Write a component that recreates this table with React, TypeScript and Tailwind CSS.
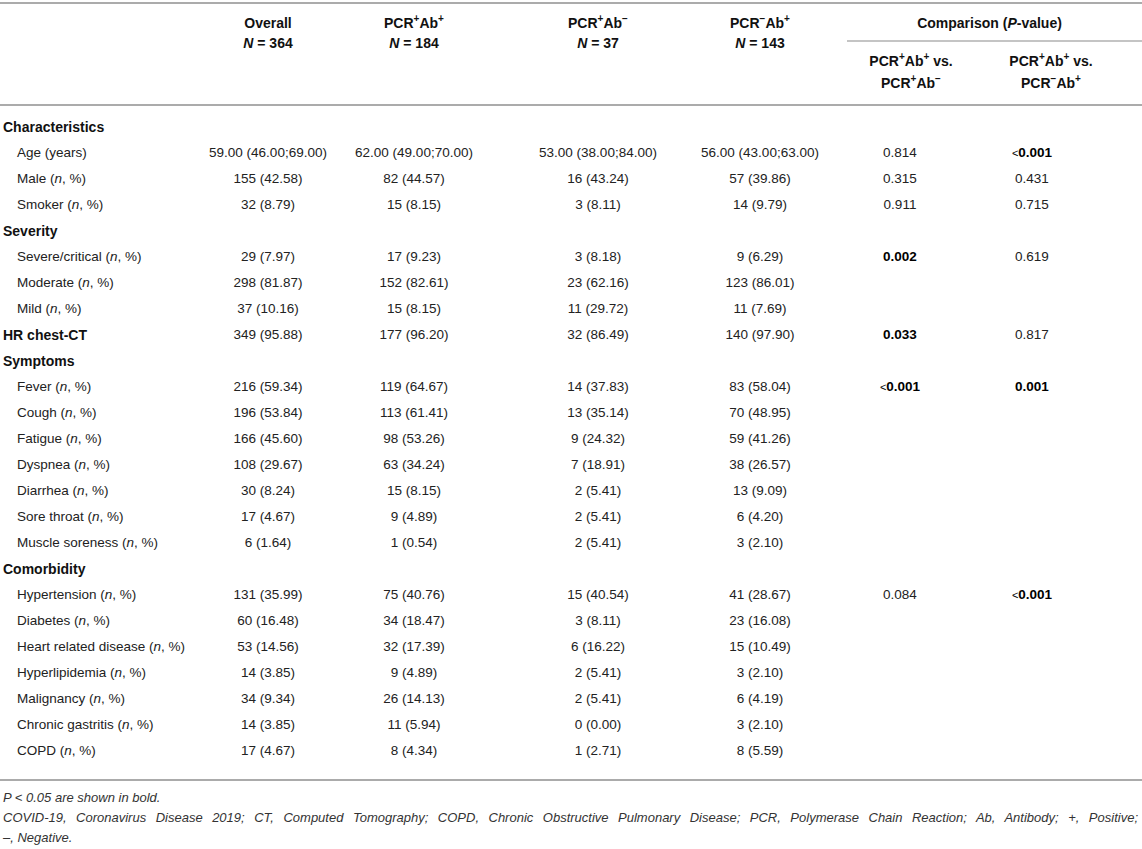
import React from "react";

type P = { t: string; b?: boolean; lt?: boolean };
type Row =
  | { kind: "section"; label: string }
  | { kind: "row"; label: string; np?: boolean; bold?: boolean; v: string[]; p1?: P; p2?: P };

const rows: Row[] = [
  { kind: "section", label: "Characteristics" },
  { kind: "row", label: "Age (years)", v: ["59.00 (46.00;69.00)", "62.00 (49.00;70.00)", "53.00 (38.00;84.00)", "56.00 (43.00;63.00)"], p1: { t: "0.814" }, p2: { t: "0.001", b: true, lt: true } },
  { kind: "row", label: "Male", np: true, v: ["155 (42.58)", "82 (44.57)", "16 (43.24)", "57 (39.86)"], p1: { t: "0.315" }, p2: { t: "0.431" } },
  { kind: "row", label: "Smoker", np: true, v: ["32 (8.79)", "15 (8.15)", "3 (8.11)", "14 (9.79)"], p1: { t: "0.911" }, p2: { t: "0.715" } },
  { kind: "section", label: "Severity" },
  { kind: "row", label: "Severe/critical", np: true, v: ["29 (7.97)", "17 (9.23)", "3 (8.18)", "9 (6.29)"], p1: { t: "0.002", b: true }, p2: { t: "0.619" } },
  { kind: "row", label: "Moderate", np: true, v: ["298 (81.87)", "152 (82.61)", "23 (62.16)", "123 (86.01)"] },
  { kind: "row", label: "Mild", np: true, v: ["37 (10.16)", "15 (8.15)", "11 (29.72)", "11 (7.69)"] },
  { kind: "row", label: "HR chest-CT", bold: true, v: ["349 (95.88)", "177 (96.20)", "32 (86.49)", "140 (97.90)"], p1: { t: "0.033", b: true }, p2: { t: "0.817" } },
  { kind: "section", label: "Symptoms" },
  { kind: "row", label: "Fever", np: true, v: ["216 (59.34)", "119 (64.67)", "14 (37.83)", "83 (58.04)"], p1: { t: "0.001", b: true, lt: true }, p2: { t: "0.001", b: true } },
  { kind: "row", label: "Cough", np: true, v: ["196 (53.84)", "113 (61.41)", "13 (35.14)", "70 (48.95)"] },
  { kind: "row", label: "Fatigue", np: true, v: ["166 (45.60)", "98 (53.26)", "9 (24.32)", "59 (41.26)"] },
  { kind: "row", label: "Dyspnea", np: true, v: ["108 (29.67)", "63 (34.24)", "7 (18.91)", "38 (26.57)"] },
  { kind: "row", label: "Diarrhea", np: true, v: ["30 (8.24)", "15 (8.15)", "2 (5.41)", "13 (9.09)"] },
  { kind: "row", label: "Sore throat", np: true, v: ["17 (4.67)", "9 (4.89)", "2 (5.41)", "6 (4.20)"] },
  { kind: "row", label: "Muscle soreness", np: true, v: ["6 (1.64)", "1 (0.54)", "2 (5.41)", "3 (2.10)"] },
  { kind: "section", label: "Comorbidity" },
  { kind: "row", label: "Hypertension", np: true, v: ["131 (35.99)", "75 (40.76)", "15 (40.54)", "41 (28.67)"], p1: { t: "0.084" }, p2: { t: "0.001", b: true, lt: true } },
  { kind: "row", label: "Diabetes", np: true, v: ["60 (16.48)", "34 (18.47)", "3 (8.11)", "23 (16.08)"] },
  { kind: "row", label: "Heart related disease", np: true, v: ["53 (14.56)", "32 (17.39)", "6 (16.22)", "15 (10.49)"] },
  { kind: "row", label: "Hyperlipidemia", np: true, v: ["14 (3.85)", "9 (4.89)", "2 (5.41)", "3 (2.10)"] },
  { kind: "row", label: "Malignancy", np: true, v: ["34 (9.34)", "26 (14.13)", "2 (5.41)", "6 (4.19)"] },
  { kind: "row", label: "Chronic gastritis", np: true, v: ["14 (3.85)", "11 (5.94)", "0 (0.00)", "3 (2.10)"] },
  { kind: "row", label: "COPD", np: true, v: ["17 (4.67)", "8 (4.34)", "1 (2.71)", "8 (5.59)"] },
];

const cols = "grid grid-cols-[197px_142px_150px_218px_106px_174px_90px_65px]";

function Grp({ pcr, ab }: { pcr: string; ab: string }) {
  return (
    <>
      PCR<sup className="text-[10px] top-[-0.6em]">{pcr}</sup>Ab<sup className="text-[10px] top-[-0.6em]">{ab}</sup>
    </>
  );
}

function PVal({ p }: { p?: P }) {
  if (!p) return null;
  return (
    <span className={p.b ? "font-bold text-black" : ""}>
      {p.lt && <span className="font-normal text-[11px]">&lt;</span>}
      {p.t}
    </span>
  );
}

function Cell({ children }: { children?: React.ReactNode }) {
  return <div className="flex justify-center whitespace-nowrap">{children}</div>;
}

function Head({ pcr, ab, n }: { pcr: string; ab: string; n: string }) {
  return (
    <div className="row-span-2 flex flex-col items-center pt-[9px] leading-[20px]">
      <span>
        <Grp pcr={pcr} ab={ab} />
      </span>
      <span>
        <i>N</i> = {n}
      </span>
    </div>
  );
}

export default function App() {
  return (
    <div className="w-[1142px] h-[849px] bg-white pt-[2px] font-['Liberation_Sans',Arial,sans-serif] text-[13.5px] text-[#222] overflow-hidden">
      <div className="border-t-2 border-[#ababab]">
        {/* header */}
        <div className={`${cols} grid-rows-[38px_62px] border-b-2 border-[#ababab] font-bold text-[14px] text-[#111]`}>
          <div className="row-span-2" />
          <div className="row-span-2 flex flex-col items-center pt-[9px] leading-[20px]">
            <span>Overall</span>
            <span>
              <i>N</i> = 364
            </span>
          </div>
          <Head pcr="+" ab="+" n="184" />
          <Head pcr="+" ab="−" n="37" />
          <Head pcr="−" ab="+" n="143" />
          <div className="col-span-3 ml-[34px] border-b-2 border-[#c4c4c4] pt-[9px] leading-[20px] text-center pr-[10px]">
            Comparison (<i>P</i>-value)
          </div>
          <div className="col-start-6 col-span-3 flex pt-[8px] leading-[22px]">
            <div className="w-[196px] flex flex-col items-center">
              <span className="whitespace-nowrap">
                <Grp pcr="+" ab="+" /> vs.
              </span>
              <span>
                <Grp pcr="+" ab="−" />
              </span>
            </div>
            <div className="w-[84px] flex flex-col items-center">
              <span className="whitespace-nowrap">
                <Grp pcr="+" ab="+" /> vs.
              </span>
              <span>
                <Grp pcr="−" ab="+" />
              </span>
            </div>
          </div>
        </div>

        {/* body */}
        <div className="pt-[8px] pb-[15px] border-b-2 border-[#ababab]">
          {rows.map((r, i) =>
            r.kind === "section" ? (
              <div key={i} className="h-[26px] leading-[26px] pl-[3px] font-bold text-[14px] text-[#111]">
                {r.label}
              </div>
            ) : (
              <div key={i} className={`${cols} h-[26px] leading-[26px]`}>
                <div className={r.bold ? "pl-[3px] font-bold text-[14px] text-[#111] whitespace-nowrap" : "pl-[17px] whitespace-nowrap"}>
                  {r.label}
                  {r.np && (
                    <>
                      {" "}(<i>n</i>, %)
                    </>
                  )}
                </div>
                {r.v.map((x, j) => (
                  <Cell key={j}>{x}</Cell>
                ))}
                <Cell>
                  <PVal p={r.p1} />
                </Cell>
                <Cell>
                  <PVal p={r.p2} />
                </Cell>
                <div />
              </div>
            )
          )}
        </div>

        {/* footnotes */}
        <div className="pt-[7px] pl-[3px] pr-[4px] italic text-[13px] leading-[20px] text-[#333]">
          <p>
            <i>P</i> &lt; 0.05 are shown in bold.
          </p>
          <p className="text-justify [text-align-last:justify]">
            COVID-19, Coronavirus Disease 2019; CT, Computed Tomography; COPD, Chronic Obstructive Pulmonary Disease; PCR, Polymerase Chain Reaction; Ab, Antibody; +, Positive;
          </p>
          <p>–, Negative.</p>
        </div>
      </div>
    </div>
  );
}
